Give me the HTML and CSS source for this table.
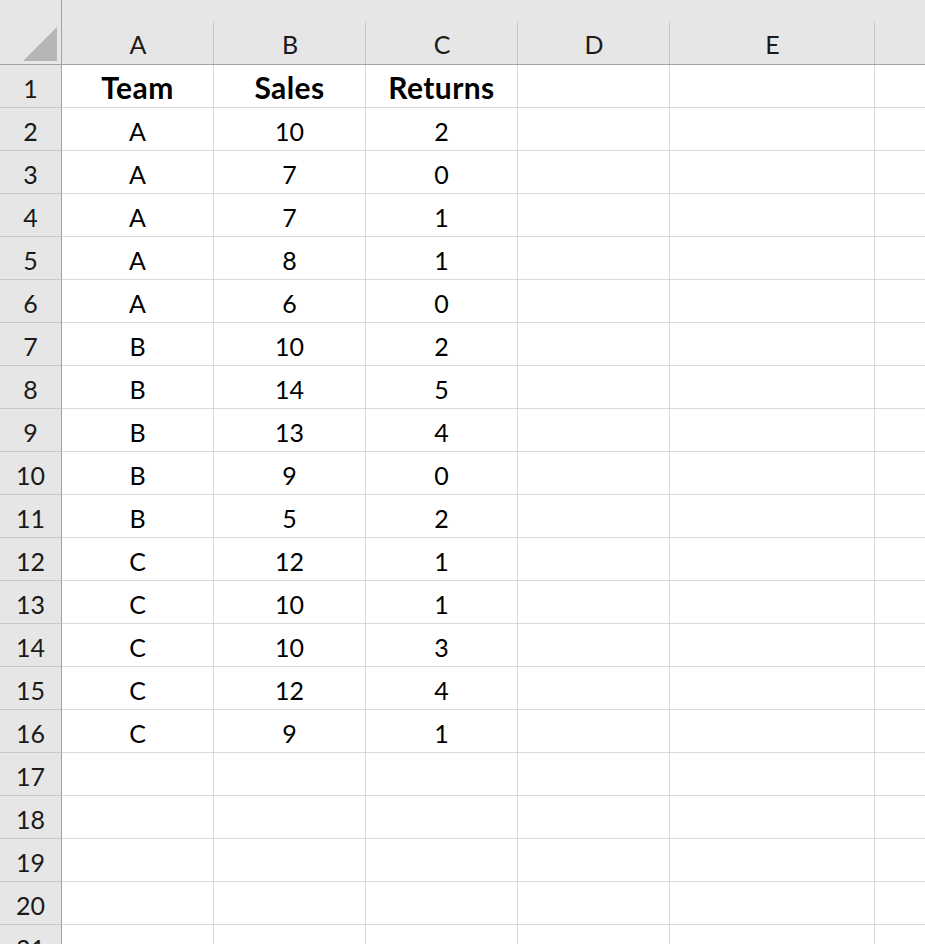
FILE: index.html
```html
<!DOCTYPE html>
<html>
<head>
<meta charset="utf-8">
<link rel="stylesheet" href="styles.css">
</head>
<body>
<div class="sheet">
  <div class="hd corner"><svg class="tri" width="36" height="36" viewBox="0 0 36 36"><polygon points="0,35 34,35 34,1" fill="#b5b5b5"/></svg></div>
  <div class="hd col">A</div>
  <div class="hd col">B</div>
  <div class="hd col">C</div>
  <div class="hd col">D</div>
  <div class="hd col">E</div>
  <div class="hd col last"></div>

  <div class="rh">1</div><div class="c b">Team</div><div class="c b">Sales</div><div class="c b">Returns</div><div class="c"></div><div class="c"></div><div class="c last"></div>
  <div class="rh">2</div><div class="c">A</div><div class="c">10</div><div class="c">2</div><div class="c"></div><div class="c"></div><div class="c last"></div>
  <div class="rh">3</div><div class="c">A</div><div class="c">7</div><div class="c">0</div><div class="c"></div><div class="c"></div><div class="c last"></div>
  <div class="rh">4</div><div class="c">A</div><div class="c">7</div><div class="c">1</div><div class="c"></div><div class="c"></div><div class="c last"></div>
  <div class="rh">5</div><div class="c">A</div><div class="c">8</div><div class="c">1</div><div class="c"></div><div class="c"></div><div class="c last"></div>
  <div class="rh">6</div><div class="c">A</div><div class="c">6</div><div class="c">0</div><div class="c"></div><div class="c"></div><div class="c last"></div>
  <div class="rh">7</div><div class="c">B</div><div class="c">10</div><div class="c">2</div><div class="c"></div><div class="c"></div><div class="c last"></div>
  <div class="rh">8</div><div class="c">B</div><div class="c">14</div><div class="c">5</div><div class="c"></div><div class="c"></div><div class="c last"></div>
  <div class="rh">9</div><div class="c">B</div><div class="c">13</div><div class="c">4</div><div class="c"></div><div class="c"></div><div class="c last"></div>
  <div class="rh">10</div><div class="c">B</div><div class="c">9</div><div class="c">0</div><div class="c"></div><div class="c"></div><div class="c last"></div>
  <div class="rh">11</div><div class="c">B</div><div class="c">5</div><div class="c">2</div><div class="c"></div><div class="c"></div><div class="c last"></div>
  <div class="rh">12</div><div class="c">C</div><div class="c">12</div><div class="c">1</div><div class="c"></div><div class="c"></div><div class="c last"></div>
  <div class="rh">13</div><div class="c">C</div><div class="c">10</div><div class="c">1</div><div class="c"></div><div class="c"></div><div class="c last"></div>
  <div class="rh">14</div><div class="c">C</div><div class="c">10</div><div class="c">3</div><div class="c"></div><div class="c"></div><div class="c last"></div>
  <div class="rh">15</div><div class="c">C</div><div class="c">12</div><div class="c">4</div><div class="c"></div><div class="c"></div><div class="c last"></div>
  <div class="rh">16</div><div class="c">C</div><div class="c">9</div><div class="c">1</div><div class="c"></div><div class="c"></div><div class="c last"></div>
  <div class="rh">17</div><div class="c"></div><div class="c"></div><div class="c"></div><div class="c"></div><div class="c"></div><div class="c last"></div>
  <div class="rh">18</div><div class="c"></div><div class="c"></div><div class="c"></div><div class="c"></div><div class="c"></div><div class="c last"></div>
  <div class="rh">19</div><div class="c"></div><div class="c"></div><div class="c"></div><div class="c"></div><div class="c"></div><div class="c last"></div>
  <div class="rh">20</div><div class="c"></div><div class="c"></div><div class="c"></div><div class="c"></div><div class="c"></div><div class="c last"></div>
  <div class="rh">21</div><div class="c"></div><div class="c"></div><div class="c"></div><div class="c"></div><div class="c"></div><div class="c last"></div>
</div>
</body>
</html>
```

FILE: styles.css
```css
html, body {
  margin: 0;
  padding: 0;
  background: #ffffff;
  overflow: hidden;
}
.sheet {
  display: grid;
  grid-template-columns: 62px 152px 152px 152px 152px 205px 60px;
  grid-template-rows: 65px repeat(21, 43px);
  width: 935px;
  font-family: "Lato", "Open Sans", sans-serif;
  color: #000;
}
.hd {
  box-sizing: border-box;
  background: #e6e6e6 linear-gradient(#c8c8c8, #c8c8c8) no-repeat right bottom / 1px 42px;
  border-bottom: 1px solid #a3a3a3;
  display: flex;
  align-items: center;
  justify-content: center;
  font-size: 25px;
  padding-top: 24px;
  color: #1a1a1a;
}
.corner {
  background: #e6e6e6;
  border-right: 1px solid #a3a3a3;
  justify-content: flex-start;
  align-items: flex-end;
  padding: 0 0 2px 23px;
}
.tri {
  display: block;
}
.rh {
  box-sizing: border-box;
  background: #e6e6e6;
  border-right: 1px solid #a3a3a3;
  border-bottom: 1px solid #c8c8c8;
  display: flex;
  align-items: center;
  justify-content: center;
  font-size: 25px;
  padding-top: 4px;
  color: #1a1a1a;
}
.c {
  box-sizing: border-box;
  border-right: 1px solid #d9d9d9;
  border-bottom: 1px solid #d9d9d9;
  display: flex;
  align-items: center;
  justify-content: center;
  font-size: 25px;
  padding-top: 4px;
}
.b {
  font-weight: 700;
  font-size: 30px;
  letter-spacing: 0.4px;
  padding-top: 2px;
}
```
